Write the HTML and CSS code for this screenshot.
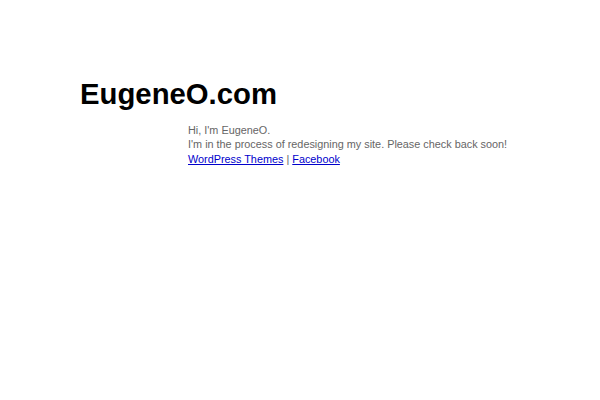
FILE: index.html
```html
<!DOCTYPE html>
<html>
<head>
<meta charset="utf-8">
<link rel="stylesheet" href="styles.css">
</head>
<body>
<div class="page">
  <h1 class="title">EugeneO.com</h1>
  <div class="content">
    Hi, I'm EugeneO.<br>
    I'm in the process of redesigning my site. Please check back soon!<br>
    <a href="#">WordPress Themes</a> | <a href="#">Facebook</a>
  </div>
</div>
</body>
</html>
```
FILE: styles.css
```css
html, body {
  margin: 0;
  padding: 0;
  background: #fff;
}
.page {
  padding: 76px 0 0 80px;
  font-family: "Liberation Sans", Arial, sans-serif;
}
.title {
  margin: 0;
  font-size: 29.3px;
  font-weight: bold;
  color: #000;
  line-height: 36px;
}
.content {
  margin: 10.5px 0 0 108px;
  font-size: 10.85px;
  line-height: 14.5px;
  color: #666;
}
.content a {
  color: #00c;
}
```
